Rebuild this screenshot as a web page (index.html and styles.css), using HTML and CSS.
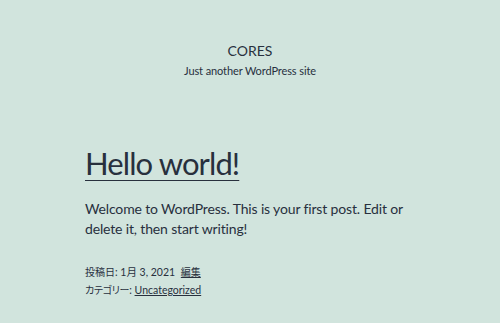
FILE: index.html
```html
<!DOCTYPE html>
<html lang="ja">

<head>
    <meta charset="UTF-8">
    <meta name="viewport" content="width=device-width, initial-scale=1.0">
    <title>CORES</title>
    <link rel="stylesheet" href="styles.css">
</head>

<body>

    <header class="site-header">
        <p class="site-title">CORES</p>
        <p class="site-description">Just another WordPress site</p>
    </header>

    <main class="site-main">
        <article class="post">
            <h1 class="entry-title"><a href="#">Hello world!</a></h1>
            <div class="entry-content">
                <p>Welcome to WordPress. This is your first post. Edit or delete it, then start writing!</p>
            </div>
            <footer class="entry-footer">
                <div class="posted-on"><span class="ja">投稿日</span>: 1月 3, 2021 <a href="#" class="edit-link ja">編集</a></div>
                <div class="cat-links"><span class="ja kana">カテゴリー</span>: <a href="#">Uncategorized</a></div>
            </footer>
        </article>
    </main>

</body>

</html>
```

FILE: styles.css
```css
body {
    margin: 0;
    background-color: #d1e4dd;
    color: #28303d;
    font-family: Lato, "Noto Sans CJK JP", sans-serif;
    font-feature-settings: "palt";
}

a {
    color: #28303d;
}

.site-header {
    text-align: center;
    padding-top: 41px;
}

.site-title {
    margin: 0;
    font-size: 14px;
    line-height: 20px;
}

.site-description {
    margin: 2px 0 0;
    font-size: 11px;
    line-height: 16px;
    letter-spacing: -0.1px;
}

.site-main {
    padding: 0 85px;
    margin-top: 62px;
}

.entry-title {
    margin: 0;
    font-size: 31px;
    font-weight: normal;
    line-height: 44px;
    letter-spacing: -0.9px;
}

.entry-title a {
    text-decoration-thickness: 1px;
    text-underline-offset: 5px;
}

.entry-content p {
    margin: 14px 0 0;
    font-size: 14px;
    line-height: 20px;
    letter-spacing: -0.15px;
    max-width: 330px;
}

.entry-footer {
    margin-top: 24px;
    font-size: 10.5px;
    line-height: 18px;
}

.ja {
    font-size: 10px;
}

.kana {
    letter-spacing: -0.3px;
}

.edit-link {
    margin-left: 3px;
}
```
